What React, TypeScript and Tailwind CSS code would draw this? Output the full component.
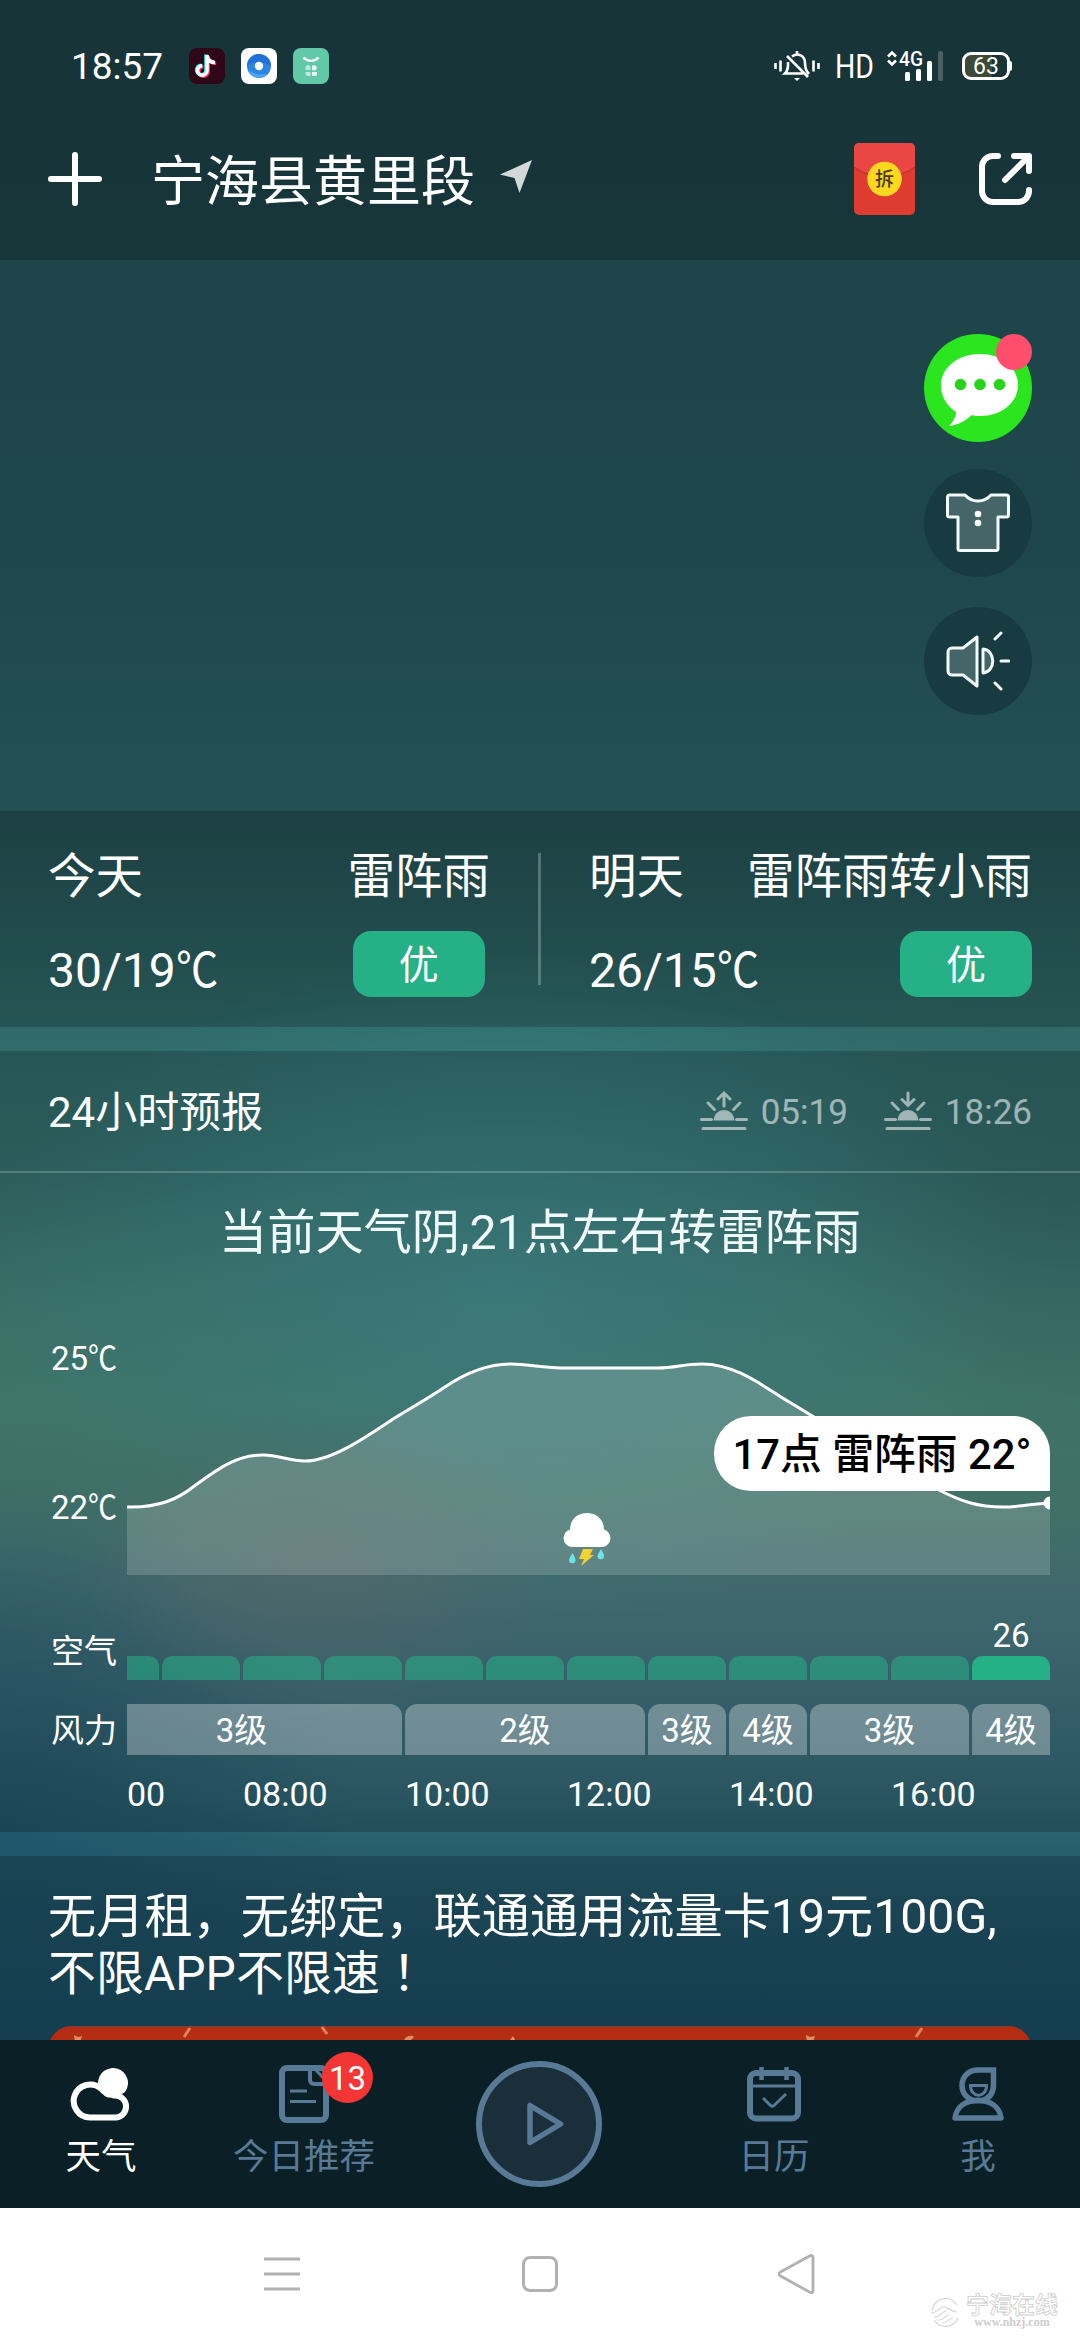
import type { ReactNode } from "react";
import clsx from "clsx";

const WIND = [
  { level: "3级", width: "w-[321px]" },
  { level: "2级", width: "w-[240px]" },
  { level: "3级", width: "w-[78px]" },
  { level: "4级", width: "w-[78px]" },
  { level: "3级", width: "w-[159px]" },
  { level: "4级", width: "w-[78px]" },
];

const HOURS = ["00", "08:00", "10:00", "12:00", "14:00", "16:00"];

const CURVE =
  "M0 216C33 217 52 207 66 196C88 180 108 164 136 164C152 164 162 170 178 170C204 170 236 148 266 128C284 117 300 108 318 96C340 81 362 73 384 73C402 73 414 77 441 77H530C549 77 556 73 575 73C612 73 642 100 664 112C710 140 770 178 814 200C834 210 850 216 876 216C892 216 904 213 923 212";

function StatusBar() {
  return (
    <div className="flex h-[132px] items-center pl-[71px] pr-[68px] text-white">
      <span className="w-[118px] text-[37px] leading-none">18:57</span>
      <div className="flex gap-4">
        <svg width="36" height="36" viewBox="0 0 36 36">
          <rect width="36" height="36" rx="8" fill="#2e0718" />
          <path d="M18 7v15.5a4.7 4.7 0 1 1-4.7-4.7M18 8c.6 4.300 3.600 6.300 8 6.500" transform="translate(1.200 1)" fill="none" stroke="#fe2c55" strokeWidth="3.600" />
          <path d="M18 7v15.5a4.7 4.7 0 1 1-4.7-4.7M18 8c.6 4.300 3.600 6.300 8 6.500" transform="translate(-1 -.6)" fill="none" stroke="#25f4ee" strokeWidth="3.600" />
          <path d="M18 7v15.5a4.7 4.700 0 1 1-4.700-4.700M18 8c.6 4.300 3.600 6.300 8 6.500" fill="none" stroke="#fff" strokeWidth="3.600" />
        </svg>
        <svg width="36" height="36" viewBox="0 0 36 36">
          <rect width="36" height="36" rx="8" fill="#fff" />
          <circle cx="18" cy="18" r="12" fill="#2b86e3" />
          <path d="M6 18a12 12 0 0 1 24 0c-6-4-18-6-24 0z" fill="#1f73d6" />
          <path d="M7 22a12 12 0 0 0 20 4c-7 1-14 0-20-4z" fill="#4aa5f0" />
          <circle cx="18" cy="18" r="4.200" fill="#fff" />
        </svg>
        <svg width="36" height="36" viewBox="0 0 36 36">
          <rect width="36" height="36" rx="8" fill="#62c9a8" />
          <path d="M10.500 9.500c4 4.500 11 4.500 15 0" fill="none" stroke="#fff" strokeWidth="2.400" />
          <path d="M12.500 19.500a2.500 2.500 0 0 1 5 0v2.500h-5zM12.500 24h5v4h-2.500a2.500 2.500 0 0 1-2.500-2.500z" fill="#b9e9d8" />
          <path d="M19 17.500h3a2.500 2.500 0 0 1 0 4.800h-3zM19 24h5v1.500a2.500 2.500 0 0 1-2.500 2.500H19z" fill="#eafaf4" />
        </svg>
      </div>
      <div className="ml-auto flex items-center">
        <svg width="46" height="32" viewBox="0 0 46 32" fill="none" stroke="#fff" strokeWidth="2.600">
          <path d="M1.500 13v6M6.500 10.500v11M39.500 10.500v11M44.500 13v6" />
          <path d="M18 6.500c6-4.500 13-.5 13 6.500 0 5 1 8 4 11M14 12c.5 6-.5 9-3 11.500h18M13 6l21 21M23 1v3" />
          <path d="M20 28h6l-3 3z" fill="#fff" stroke="none" />
        </svg>
        <svg className="ml-[15px] overflow-visible" width="52" height="40" viewBox="0 0 52 40">
          <text x="0" y="32" fill="#fff" fontSize="34" textLength="39" lengthAdjust="spacingAndGlyphs">HD</text>
        </svg>
        <svg className="overflow-visible" width="58" height="32" viewBox="0 0 58 32">
          <path d="M1 7l4-4 4 4M1 11l4 4 4-4" transform="translate(0 -.5)" fill="none" stroke="#fff" strokeWidth="2.600" />
          <text x="12" y="15.500" fill="#fff" fontSize="20" fontWeight="500" textLength="24" lengthAdjust="spacingAndGlyphs">4G</text>
          <rect x="18" y="22" width="5" height="9" rx="1.500" fill="#fff" />
          <rect x="29" y="19" width="5" height="12" rx="1.500" fill="#fff" />
          <rect x="40" y="11" width="5" height="20" rx="1.500" fill="#fff" />
          <rect x="51" y="1" width="5" height="30" rx="1.500" fill="#49605f" />
        </svg>
        <div className="ml-[17px] flex items-center">
          <div className="flex h-[28px] w-[48px] items-center justify-center rounded-[9px] border-[3px] border-white bg-[linear-gradient(90deg,#3d4a35_64%,#173538_64%)] text-[23px] leading-none">63</div>
          <div className="h-[10px] w-[2px] rounded-r bg-white" />
        </div>
      </div>
    </div>
  );
}

function TitleBar() {
  return (
    <div className="flex h-[128px] items-center pb-[34px] pl-12 pr-12">
      <svg width="54" height="54" viewBox="0 0 54 54" stroke="#fff" strokeWidth="6" strokeLinecap="round">
        <path d="M27 3v48M3 27h48" />
      </svg>
      <h1 className="ml-[49px] mt-[8px] text-[54px] leading-none text-white">宁海县黄里段</h1>
      <svg className="-mt-[4px] ml-[25px]" width="32" height="34" viewBox="0 0 32 34">
        <path d="M32 0L0 14.500l14.500 3.500L19.500 33z" fill="#d3d9d9" />
      </svg>
      <svg className="-mt-px ml-auto" width="61" height="72" viewBox="0 0 61 72">
        <rect width="61" height="72" rx="5" fill="#df3c31" />
        <path d="M0 24V5a5 5 0 0 1 5-5h51a5 5 0 0 1 5 5v19C46 36 15 36 0 24z" fill="#ea4644" />
        <path d="M0 24c15 12 46 12 61 0" fill="none" stroke="#cc3329" strokeWidth="1.500" />
        <circle cx="30.500" cy="36" r="17.300" fill="#fcd91f" />
        <text x="30.500" y="43" textAnchor="middle" fontSize="19" fontWeight="500" fill="#4d3a0a">拆</text>
      </svg>
      <svg className="ml-[63px]" width="54" height="54" viewBox="0 0 54 54" fill="none" stroke="#fff" strokeWidth="6" strokeLinecap="round" strokeLinejoin="round">
        <path d="M20 4h-5A11 11 0 0 0 4 15v24a11 11 0 0 0 11 11h25a11 11 0 0 0 11-11v-1M36 4h15v15M51 4L27 28" />
      </svg>
    </div>
  );
}

function FloatingActions() {
  return (
    <div className="flex h-[551px] flex-col items-end pr-12 pt-[74px]">
      <svg width="108" height="108" viewBox="0 0 108 108">
        <circle cx="54" cy="54" r="54" fill="#2be51f" />
        <path d="M56 20c21 0 38 13 38 31S77 82 56 82c-3 0-6 0-8-1-6 5-13 10-23 11 4-4 7-9 7-14-9-6-15-15-15-27 0-18 18-31 39-31z" fill="#fff" />
        <circle cx="36.500" cy="50.500" r="5.800" fill="#27d41c" />
        <circle cx="56" cy="50.500" r="5.800" fill="#27d41c" />
        <circle cx="75.500" cy="50.500" r="5.800" fill="#27d41c" />
        <circle cx="90" cy="18" r="18" fill="#ff4d6d" />
      </svg>
      <div className="mt-[27px] flex size-[108px] items-center justify-center rounded-full bg-[#183b41]">
        <svg width="64" height="60" viewBox="0 0 64 60">
          <path d="M3.500 2H19c7 8 19 8 26 0h15.500a2 2 0 0 1 2 2v18a2 2 0 0 1-2 2H52v31.500a2 2 0 0 1-2 2H14a2 2 0 0 1-2-2V24H3.500a2 2 0 0 1-2-2V4a2 2 0 0 1 2-2z" fill="#466568" stroke="#f2fafa" strokeWidth="3" strokeLinejoin="round" />
          <circle cx="32" cy="21" r="3.300" fill="#fff" />
          <circle cx="32" cy="30" r="3.300" fill="#fff" />
        </svg>
      </div>
      <div className="mt-[30px] flex size-[108px] items-center justify-center rounded-full bg-[#183b41]">
        <svg width="64" height="62" viewBox="0 0 64 62" stroke="#f2fafa" strokeWidth="3" strokeLinejoin="round" strokeLinecap="round">
          <path d="M6 18h11L31 7v49L17 45H6a4 4 0 0 1-4-4V22a4 4 0 0 1 4-4z" fill="#466568" />
          <path d="M37 19c13 1 13 23 0 24z" fill="#466568" />
          <path d="M49 9l6-6M55 31h8M49 53l6 6" />
        </svg>
      </div>
    </div>
  );
}

function Temp({ value }: { value: string }) {
  return (
    <>
      {value}
      <span className="inline-block origin-left scale-x-[.88]">℃</span>
    </>
  );
}

interface DayProps {
  day: string;
  weather: string;
  temp: string;
  className: string;
  align: string;
}

function DayForecast({ day, weather, temp, className, align }: DayProps) {
  return (
    <div className={clsx("flex shrink-0 justify-between whitespace-nowrap text-[48px] leading-[48px]", className)}>
      <div className="flex w-[96px] flex-col pt-[42px]">
        <span className="text-[47.500px]">{day}</span>
        <span className="mt-[46px]">
          <Temp value={temp} />
        </span>
      </div>
      <div className={clsx("flex flex-col pt-[42px]", align)}>
        <span className="text-[47.500px]">{weather}</span>
        <div className="mt-[30px] flex h-[66px] w-[132px] items-center justify-center rounded-[18px] bg-[#26b086] pt-[4px] text-[40px] leading-none">
          优
        </div>
      </div>
    </div>
  );
}

function SunIcon({ down }: { down?: boolean }) {
  return (
    <svg width="48" height="40" viewBox="0 0 48 40" stroke="currentColor" strokeWidth="3" fill="none" strokeLinecap="round">
      <path d="M1.500 28.500h10M36.500 28.500h10M3 37.500h42M8 12l6.500 6.500M40 12l-6.500 6.500" />
      <path d="M13.500 29.500a10.500 10.500 0 0 1 21 0z" fill="currentColor" stroke="none" />
      {down ? <path d="M24 2v12M18 8.500l6 6 6-6" /> : <path d="M24 15V2M18 8l6-6 6 6" />}
    </svg>
  );
}

function TempChart() {
  return (
    <div className="flex">
      <div className="flex w-[127px] flex-col pl-[51px] pt-[51px] text-[33px] leading-[34px]">
        <span className="whitespace-nowrap">
          <Temp value="25" />
        </span>
        <span className="mt-[115px] whitespace-nowrap">
          <Temp value="22" />
        </span>
      </div>
      <div className="relative h-[284px] w-[923px]">
        <svg className="block" width="923" height="284" viewBox="0 0 923 284">
          <path d={CURVE + "V284H0z"} fill="#fff" fillOpacity=".17" />
          <path d={CURVE} fill="none" stroke="#fff" strokeWidth="3" />
          <circle cx="923" cy="212" r="6.500" fill="#fff" />
        </svg>
        <div className="absolute right-0 top-[125px] flex h-[75px] w-[336px] items-center justify-center whitespace-pre rounded-[37px] rounded-br-none bg-white pt-[3px] text-[41.800px] font-medium leading-none text-black">
          17点 雷阵雨 22°
        </div>
        <svg className="absolute left-[435px] top-[221px]" width="50" height="54" viewBox="0 0 50 54">
          <path d="M9 35a9 9 0 0 1-1-17.500C8 8 15 1 25 1s17 7 17 16.500A9 9 0 0 1 41 35z" fill="#fff" />
          <path d="M10.500 41c2 4 3 5 3 7a3.200 3.200 0 0 1-6.500 0c0-2 2-4 3.500-7zM39 37c2 4 3 5 3 7a3.200 3.200 0 0 1-6.500 0c0-2 2-4 3.500-7z" fill="#6fe3e6" />
          <path d="M21 37h10l-3 6h4L19 54l3-7h-5z" fill="#f2d132" />
        </svg>
      </div>
    </div>
  );
}

function Hourly() {
  return (
    <section className="h-[781px] bg-black/20 text-white">
      <div className="flex h-[122px] items-center border-b-2 border-white/20 px-12">
        <h2 className="mt-[4px] text-[42px] leading-none">24小时预报</h2>
        <div className="ml-auto flex items-center text-[35px] leading-none text-white/55">
          <SunIcon />
          <span className="ml-[13px] mt-[3px]">05:19</span>
          <span className="w-[36px]" />
          <SunIcon down />
          <span className="ml-[13px] mt-[3px]">18:26</span>
        </div>
      </div>
      <p className="flex h-[118px] items-center justify-center pt-[3px] text-[48.200px] leading-none text-[#f1fafa]">当前天气阴,21点左右转雷阵雨</p>
      <TempChart />
      <div className="flex h-[105px] items-end text-[33px] leading-[34px]">
        <span className="mb-[11px] w-[127px] pl-[51px]">空气</span>
        <div className="w-[923px] overflow-hidden pt-2">
          <div className="-ml-[46px] flex w-[969px] items-end gap-[3px]">
            {Array.from({ length: 12 }, (_, i) => (
              <div key={i} className="flex w-[78px] flex-col items-center">
                {i === 11 && <span className="mb-[3px]">26</span>}
                <div className={clsx("h-6 w-full rounded-t-[10px]", i === 11 ? "bg-[#26b086]" : "bg-[#26b086]/55")} />
              </div>
            ))}
          </div>
        </div>
      </div>
      <div className="mt-6 flex h-[51px] items-center text-[33px] leading-[34px]">
        <span className="mt-[3px] w-[127px] pl-[51px]">风力</span>
        <div className="w-[923px] overflow-hidden">
          <div className="-ml-[46px] flex w-[969px] gap-[3px]">
            {WIND.map((w, i) => (
              <div key={i} className={clsx("flex h-[51px] items-center justify-center rounded-t-[12px] bg-white/30 pt-[3px]", w.width)}>
                {w.level}
              </div>
            ))}
          </div>
        </div>
      </div>
      <div className="ml-[127px] h-[77px] w-[923px] overflow-hidden">
        <div className="-ml-[46px] flex h-full w-[972px] items-center text-[34px] leading-none">
          {HOURS.map((h, i) => (
            <span key={h} className={clsx("w-[162px]", i === 0 && "pl-[46px]")}>
              {h}
            </span>
          ))}
        </div>
      </div>
    </section>
  );
}

function Promo() {
  return (
    <section className="h-[184px] overflow-hidden bg-black/20 px-12 pt-[32px] text-white">
      <p className="h-[57px] whitespace-nowrap text-[48.200px] leading-[57px]">无月租，无绑定，联通通用流量卡19元100G,</p>
      <p className="h-[57px] whitespace-nowrap text-[48px] leading-[57px]">
        不限APP不限速<span className="inline-block translate-x-[12px]">！</span>
      </p>
      <svg className="mt-[24px] block" width="984" height="48" viewBox="0 0 984 48">
        <rect width="984" height="80" rx="24" fill="#b52d13" />
        <path d="M24 1h936" stroke="#8f3a28" strokeWidth="2" />
        <path d="M136 11l6-9M274 1l5 7M868 11l6-9" stroke="#e0825a" strokeWidth="3" />
        <path d="M26 9l4 2 4-1-2 6h-5zM356 14c3-5 8-5 10-3l-3 3zM462 14l3-4 2 4zM758 9l4 2 5-1-2 6h-6z" fill="#e0915f" />
      </svg>
    </section>
  );
}

function NavItem({ label, width, active, children }: { label: string; width: string; active?: boolean; children: ReactNode }) {
  return (
    <div className={clsx("flex flex-col items-center pt-[24px]", width, active ? "text-white" : "text-[#587a96]")}>
      <div className="relative flex h-[60px] items-center">{children}</div>
      <span className="mt-[15px] text-[35.500px] leading-[36px]">{label}</span>
    </div>
  );
}

function BottomNav() {
  return (
    <nav className="flex h-[168px] bg-[#0a2026]">
      <NavItem label="天气" width="w-[202px]" active>
        <svg width="62" height="56" viewBox="0 0 62 56">
          <path d="M20 51.500a16.500 16.500 0 1 1 11-29c3 4 8 6 13 7a11 11 0 0 1 2 22z" fill="none" stroke="#fff" strokeWidth="6" />
          <path d="M28 17a15 15 0 1 1 27 9l-3 2c-4-1-8 0-11 3-3 1-6 0-8-3-3-3-5-7-5-11z" fill="#fff" />
        </svg>
      </NavItem>
      <NavItem label="今日推荐" width="w-[204px]">
        <svg width="50" height="58" viewBox="0 0 50 58" fill="none" stroke="#587a96">
          <rect x="3" y="3" width="44" height="52" rx="5" strokeWidth="6" />
          <path d="M31 3v12a4 4 0 0 0 4 4h12" strokeWidth="4" />
          <path d="M36 4l11 12" strokeWidth="3" />
          <path d="M11 26h17M11 36.500h26" strokeWidth="3" />
        </svg>
        <span className="absolute -top-[12px] left-[43px] flex size-[51px] items-center justify-center rounded-full bg-[#f33535] pt-[2px] text-[33px] leading-none text-white">
          13
        </span>
      </NavItem>
      <div className="flex w-[266px] justify-center pt-[21px]">
        <div className="flex size-[126px] items-center justify-center rounded-full border-[6px] border-[#587a96] bg-[#1b2f3b]">
          <svg className="ml-[12px]" width="38" height="48" viewBox="0 0 38 48">
            <path d="M4 5.500v37L34.500 24z" fill="none" stroke="#587a96" strokeWidth="5.500" strokeLinejoin="round" />
          </svg>
        </div>
      </div>
      <NavItem label="日历" width="w-[204px]">
        <svg width="54" height="56" viewBox="0 0 54 56" fill="none" stroke="#587a96">
          <rect x="3" y="7" width="48" height="45.500" rx="6" strokeWidth="6" />
          <path d="M3 20h48" strokeWidth="3" />
          <path d="M14.500 1v13M39.500 1v13" strokeWidth="4.500" />
          <path d="M16 32l7 7c1.500 1.500 3 1.500 4.500 0L39 28" strokeWidth="3" />
        </svg>
      </NavItem>
      <NavItem label="我" width="w-[204px]">
        <svg width="52" height="56" viewBox="0 0 52 56" fill="none" stroke="#587a96">
          <path d="M41.500 4v15c0 9-5 13.500-11 15.500h-9c-7-2-11.500-8-11.500-15C10 10 17 4 26 4z" strokeWidth="5.500" />
          <path d="M18.500 19.500h16c0 13-16 13-16 0z" strokeWidth="3" />
          <path d="M3 52c1.500-11 10-17.500 23-17.500S47.500 41 49 52z" strokeWidth="5.500" strokeLinejoin="round" />
        </svg>
      </NavItem>
    </nav>
  );
}

function SystemBar() {
  return (
    <div className="relative flex h-[132px] items-center bg-white">
      <svg className="ml-[264px]" width="36" height="36" viewBox="0 0 36 36" stroke="#b1b1b1" strokeWidth="3">
        <path d="M0 3h36M0 18h36M0 33h36" />
      </svg>
      <div className="ml-[222px] size-[36px] rounded-[8px] border-[3px] border-[#b1b1b1]" />
      <svg className="ml-[219px]" width="38" height="42" viewBox="0 0 38 42">
        <path d="M36 4.500v33c0 2-1.500 2.500-3.500 1.500L3.500 23c-2-1-2-3 0-4L32.500 3c2-1 3.500-.5 3.500 1.500z" fill="none" stroke="#b1b1b1" strokeWidth="2.800" />
      </svg>
      {/* watermark */}
      <div className="absolute bottom-[11px] left-[930px] flex items-center gap-[5px]">
        <svg width="31" height="30" viewBox="0 0 31 30" fill="none" stroke="#d6d6d6" strokeWidth="1.200">
          <path d="M27 7A13.500 13.500 0 0 0 2 13M4 22a13.500 13.500 0 0 0 24-2" />
          <path d="M1 15c5 1 8-6 13-6 4 0 7 5 13 5M4 19c6 1 8-6 12-6M8 22c5 1 7-5 11-5M12 25c5 0 6-4 11-5" />
        </svg>
        <div className="flex flex-col items-center text-white">
          <span className="text-[23px] font-bold leading-[19px] [-webkit-text-stroke:.8px_#cfcfcf]">宁海在线</span>
          <span className="font-['Liberation_Serif'] text-[12px] font-bold leading-[14px] text-[#cdcdcd]">www.nhzj.com</span>
        </div>
      </div>
    </div>
  );
}

export default function App() {
  return (
    <div className="flex h-[2340px] w-[1080px] flex-col overflow-hidden bg-[radial-gradient(240px_160px_at_320px_1560px,rgba(124,124,128,.42),transparent),radial-gradient(360px_300px_at_0px_1830px,rgba(26,80,102,.65),transparent),radial-gradient(520px_340px_at_500px_1290px,rgba(74,158,166,.6),transparent),radial-gradient(300px_260px_at_1080px_1190px,rgba(50,95,95,.35),transparent),radial-gradient(200px_180px_at_0px_1620px,rgba(50,105,125,.3),transparent),linear-gradient(180deg,#1d4246_0px,#1d4449_260px,#1e474c_560px,#245054_811px,#2f6a69_1027px,#377573_1171px,#488a80_1300px,#4f9284_1400px,#508c80_1500px,#508388_1590px,#447684_1700px,#336a79_1800px,#29606f_1845px,#215468_1920px,#1b4f64_2000px,#1b4f64_2340px)] font-[Roboto,'Noto_Sans_CJK_SC',sans-serif]">
      <header className="h-[260px] bg-black/20">
        <StatusBar />
        <TitleBar />
      </header>
      <FloatingActions />
      <section className="flex h-[216px] bg-black/20 px-12 text-white">
        <DayForecast day="今天" weather="雷阵雨" temp="30/19" className="w-[442px]" align="items-center" />
        <div className="ml-12 mt-[42px] h-[132px] w-[3px] shrink-0 bg-white/25" />
        <DayForecast day="明天" weather="雷阵雨转小雨" temp="26/15" className="ml-12 w-[443px]" align="items-end" />
      </section>
      <div className="h-6" />
      <Hourly />
      <div className="h-6" />
      <Promo />
      <BottomNav />
      <SystemBar />
    </div>
  );
}
